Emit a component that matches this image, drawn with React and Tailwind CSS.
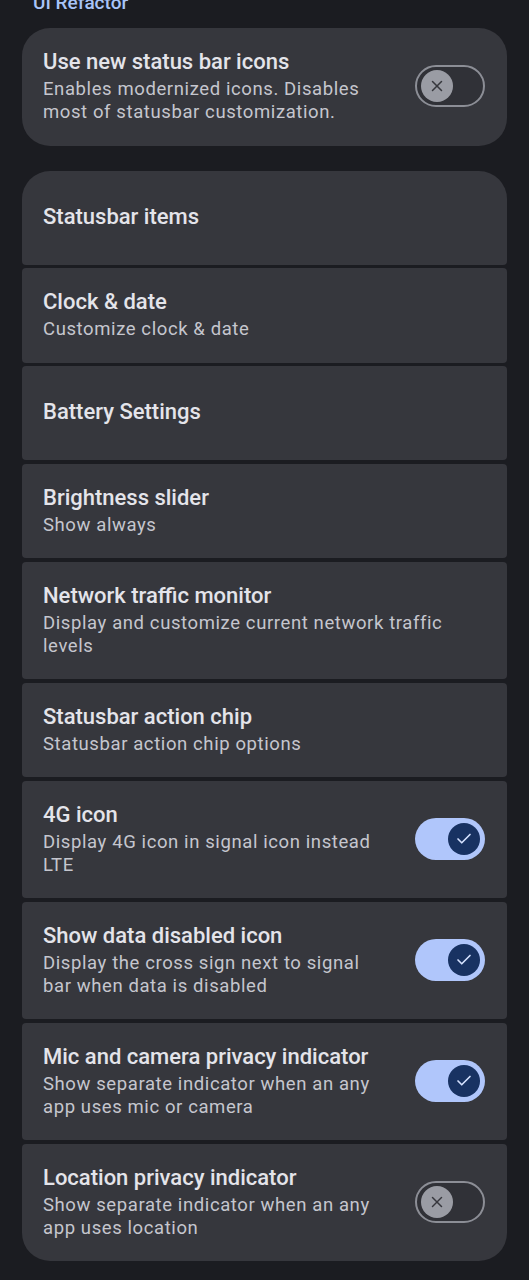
import { Check, X } from "lucide-react";

const items = [
  { title: "Statusbar items" },
  { title: "Clock & date", sub: "Customize clock & date" },
  { title: "Battery Settings" },
  { title: "Brightness slider", sub: "Show always" },
  { title: "Network traffic monitor", sub: "Display and customize current network traffic levels" },
  { title: "Statusbar action chip", sub: "Statusbar action chip options" },
  { title: "4G icon", sub: "Display 4G icon in signal icon instead LTE", toggle: true },
  { title: "Show data disabled icon", sub: "Display the cross sign next to signal bar when data is disabled", toggle: true },
  { title: "Mic and camera privacy indicator", sub: "Show separate indicator when an any app uses mic or camera", toggle: true },
  { title: "Location privacy indicator", sub: "Show separate indicator when an any app uses location", toggle: false },
];

function Switch({ on }) {
  if (on) {
    return (
      <div className="w-[70px] h-[42px] rounded-full bg-[#b0c6fb] flex items-center justify-end pr-[5px] shrink-0 ml-[36px]">
        <div className="w-[32px] h-[32px] rounded-full bg-[#183262] flex items-center justify-center">
          <Check size={18} strokeWidth={2.2} className="text-[#d6e2ff]" />
        </div>
      </div>
    );
  }
  return (
    <div className="w-[70px] h-[42px] rounded-full border-[2.5px] border-[#8c8e96] bg-[#303137] flex items-center pl-[4px] shrink-0 ml-[36px]">
      <div className="w-[32px] h-[32px] rounded-full bg-[#9a9ca4] flex items-center justify-center">
        <X size={18} strokeWidth={2} className="text-[#36373d]" />
      </div>
    </div>
  );
}

function Row({ title, sub, toggle, className }) {
  return (
    <div className={"bg-[#36373d] min-h-[94px] flex items-center pl-[21px] pr-[22px] pt-[20px] pb-[21.5px] " + className}>
      <div className="flex-1 min-w-0">
        <div className="text-[22px] leading-[28px] font-medium text-[#e4e4ea]">{title}</div>
        {sub && <div className="mt-[2px] text-[18.5px] leading-[23px] tracking-[0.6px] text-[#c5c6ce]">{sub}</div>}
      </div>
      {toggle !== undefined && <Switch on={toggle} />}
    </div>
  );
}

export default function App() {
  return (
    <div className="w-[529px] h-[1280px] overflow-hidden bg-[#1b1c21]" style={{ fontFamily: "Roboto, 'Noto Sans', sans-serif" }}>
      <div className="px-[22px]">
        <div className="text-[19px] leading-[22px] font-medium text-[#a8c4f8] pl-[11px] -mt-[8px]">UI Refactor</div>
        <Row
          title="Use new status bar icons"
          sub="Enables modernized icons. Disables most of statusbar customization."
          toggle={false}
          className="rounded-[28px] mt-[14px]"
        />
        <div className="mt-[25px] flex flex-col gap-[3.5px]">
          {items.map((it, i) => (
            <Row
              key={it.title}
              {...it}
              className={
                i === 0
                  ? "rounded-t-[28px] rounded-b-[4px]"
                  : i === items.length - 1
                  ? "rounded-b-[28px] rounded-t-[4px]"
                  : "rounded-[4px]"
              }
            />
          ))}
        </div>
      </div>
    </div>
  );
}
